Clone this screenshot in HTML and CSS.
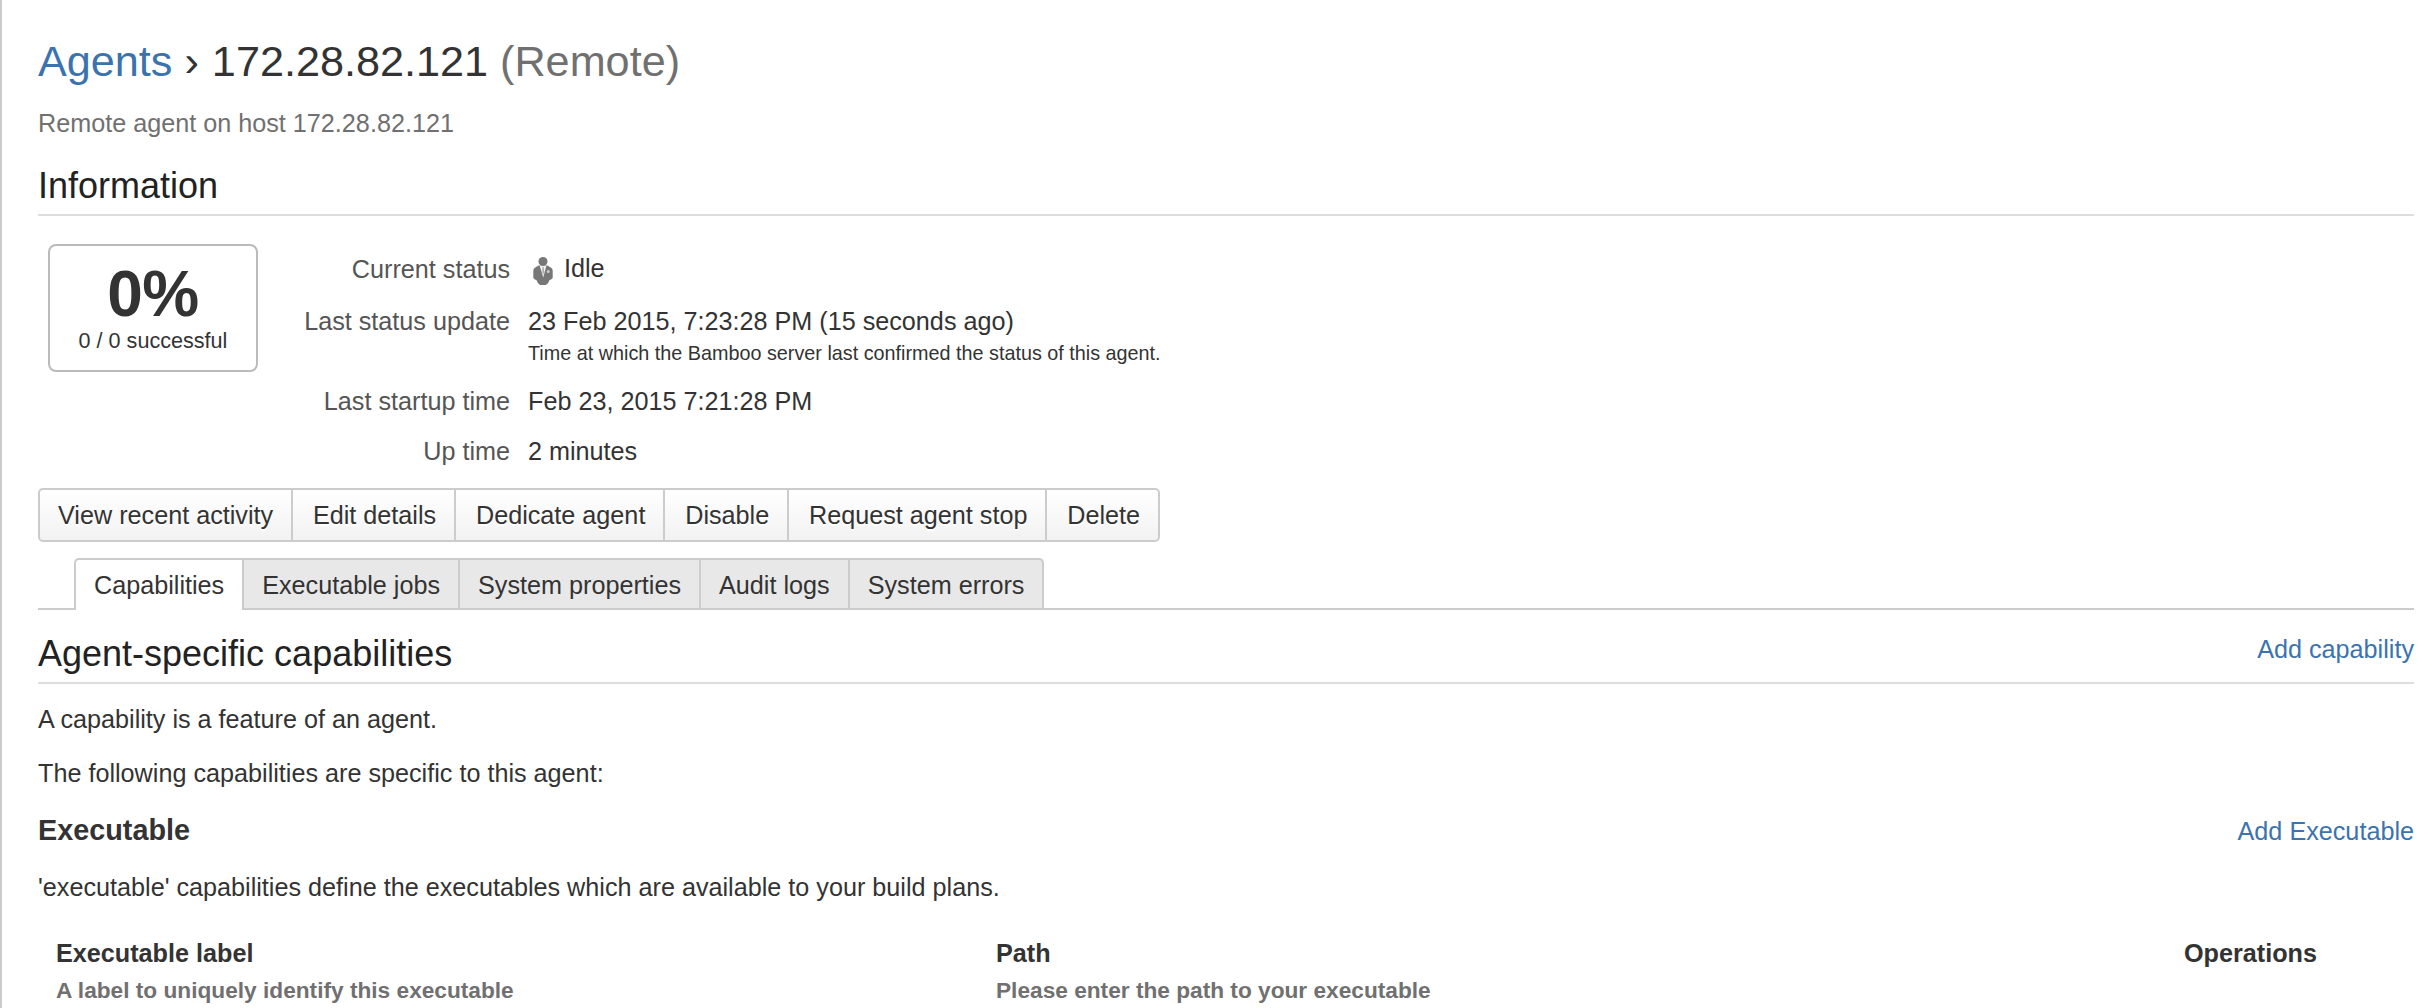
FILE: index.html
```html
<!DOCTYPE html>
<html lang="en">
<head>
<meta charset="utf-8">
<title>Agents › 172.28.82.121</title>
<link rel="stylesheet" href="styles.css">
</head>
<body>
<main class="page">
  <h1 class="title"><a href="#">Agents</a> <span class="crumb">›</span> 172.28.82.121 <span class="muted">(Remote)</span></h1>
  <p class="subtitle">Remote agent on host 172.28.82.121</p>

  <h2 class="section-title">Information</h2>
  <section class="info">
    <div class="stat">
      <strong class="stat-value">0%</strong>
      <span class="stat-note">0 / 0 successful</span>
    </div>
    <dl class="details">
      <dt>Current status</dt>
      <dd class="status">
        <svg class="agent-icon" viewBox="0 0 20 28" width="20" height="28">
          <path d="M5.500 8.500 L1.500 11 Q0.300 12 0.300 14 V21 Q2 22.800 3.400 23 Q4.600 26.500 7 28 H13 Q15.400 26.500 16.600 23 Q18 22.800 19.700 21 V14 Q19.700 12 18.500 11 L14.500 8.500 Z" fill="#777"/>
          <path d="M6.600 8.500 H13.400 L10.300 20.500 Z" fill="#f2f2f2"/>
          <path d="M9.300 10 H10.800 L11.200 15 L10.300 18 L9.200 15 Z" fill="#b0b0b0"/>
          <ellipse cx="10" cy="4.500" rx="4.500" ry="4.500" fill="#777"/>
          <circle cx="15.200" cy="14.500" r="1.500" fill="#ccc"/>
        </svg>
        <span>Idle</span>
      </dd>
      <dt>Last status update</dt>
      <dd>23 Feb 2015, 7:23:28 PM (15 seconds ago)
        <div class="description">Time at which the Bamboo server last confirmed the status of this agent.</div>
      </dd>
      <dt>Last startup time</dt>
      <dd>Feb 23, 2015 7:21:28 PM</dd>
      <dt>Up time</dt>
      <dd>2 minutes</dd>
    </dl>
  </section>

  <div class="buttons">
    <a class="button" href="#">View recent activity</a>
    <a class="button" href="#">Edit details</a>
    <a class="button" href="#">Dedicate agent</a>
    <a class="button" href="#">Disable</a>
    <a class="button" href="#">Request agent stop</a>
    <a class="button" href="#">Delete</a>
  </div>

  <nav class="tabs">
    <a class="tab active" href="#">Capabilities</a>
    <a class="tab" href="#">Executable jobs</a>
    <a class="tab" href="#">System properties</a>
    <a class="tab" href="#">Audit logs</a>
    <a class="tab" href="#">System errors</a>
  </nav>

  <header class="section-title capabilities-head">
    <h2>Agent-specific capabilities</h2>
    <a href="#">Add capability</a>
  </header>
  <p class="intro">A capability is a feature of an agent.</p>
  <p class="intro-next">The following capabilities are specific to this agent:</p>

  <header class="group-head">
    <h3>Executable</h3>
    <a href="#">Add Executable</a>
  </header>
  <p class="group-note">'executable' capabilities define the executables which are available to your build plans.</p>

  <div class="columns">
    <div>Executable label<small>A label to uniquely identify this executable</small></div>
    <div>Path<small>Please enter the path to your executable</small></div>
    <div>Operations</div>
  </div>
</main>
</body>
</html>
```
FILE: styles.css
```css
* { box-sizing: border-box; }
html, body { height: 100%; overflow: hidden; }
body {
  margin: 0;
  background: #fff;
  color: #333;
  font: 25.2px/36px "Liberation Sans", Arial, sans-serif;
}
h1, h2, h3, p, dl, dd { margin: 0; font-weight: 400; }
a { color: #3b73af; text-decoration: none; }

.page {
  height: 1008px;
  border-left: 2px solid #ccc;
  padding: 34px 22px 0 36px;
}

.title { font-size: 43.2px; line-height: 54px; }
.crumb { margin-right: 1px; }
.muted, .subtitle { color: #707070; }
.subtitle { margin-top: 17px; }

.section-title {
  border-bottom: 2px solid #ddd;
  padding-bottom: 6px;
  color: #222;
}
h2 { font-size: 36px; line-height: 45px; }
h2.section-title { margin-top: 22px; }

.info { display: flex; height: 272px; }
.stat {
  display: flex;
  flex-direction: column;
  align-items: center;
  width: 210px;
  height: 128px;
  margin: 28px 0 0 10px;
  padding-top: 15px;
  border: 2px solid #bbb;
  border-radius: 8px;
}
.stat-value { font-size: 64px; line-height: 66px; letter-spacing: -0.5px; }
.stat-note { font-size: 21.6px; line-height: 27px; }

.details {
  display: grid;
  grid-template-columns: 252px auto;
  grid-template-rows: 52px 80px 50px 36px;
  column-gap: 18px;
  margin-top: 35px;
}
dt { color: #555; text-align: right; }
.status { display: flex; gap: 11px; padding-left: 5px; margin-top: -1px; }
.agent-icon { margin-top: 7px; }
.description { margin-top: 1px; font-size: 19.8px; line-height: 26px; }

.buttons { display: flex; }
.button {
  padding: 0 18px 0 19.8px;
  border: 2px solid #ccc;
  border-left-width: 0;
  background: linear-gradient(#fff, #f2f2f2);
  color: #333;
  line-height: 50px;
  text-shadow: 0 2px 0 #fff;
}
.button:first-child {
  padding-left: 18px;
  border-left-width: 2px;
  border-radius: 5px 0 0 5px;
}
.button:last-child { border-radius: 0 5px 5px 0; }

.tabs {
  display: flex;
  margin-top: 16px;
  padding-left: 36px;
  border-bottom: 2px solid #ccc;
}
.tab {
  height: 50px;
  padding: 0 18px;
  border: 2px solid #ccc;
  border-width: 2px 2px 0 0;
  background: #e8e8e8;
  color: #333;
  line-height: 50px;
}
.tab.active {
  height: 52px;
  margin-bottom: -2px;
  border-left-width: 2px;
  border-top-left-radius: 5px;
  background: #fff;
}
.tab:last-child { border-top-right-radius: 5px; }

.capabilities-head, .group-head { display: flex; justify-content: space-between; }
.capabilities-head { margin-top: 21px; }
.intro { margin-top: 17px; }
.intro-next { margin-top: 18px; }
.group-head { height: 36px; margin-top: 21px; }
.group-head a { line-height: 38px; }
h3 { font-size: 28.8px; font-weight: 700; }
.group-note { margin-top: 21px; }

.columns {
  display: grid;
  grid-template-columns: 940px 1188px auto;
  margin-top: 30px;
  padding-left: 18px;
  font-weight: 700;
}
.columns small {
  display: block;
  margin-top: 5px;
  color: #707070;
  font-size: 22.68px;
  line-height: 28px;
}
```
